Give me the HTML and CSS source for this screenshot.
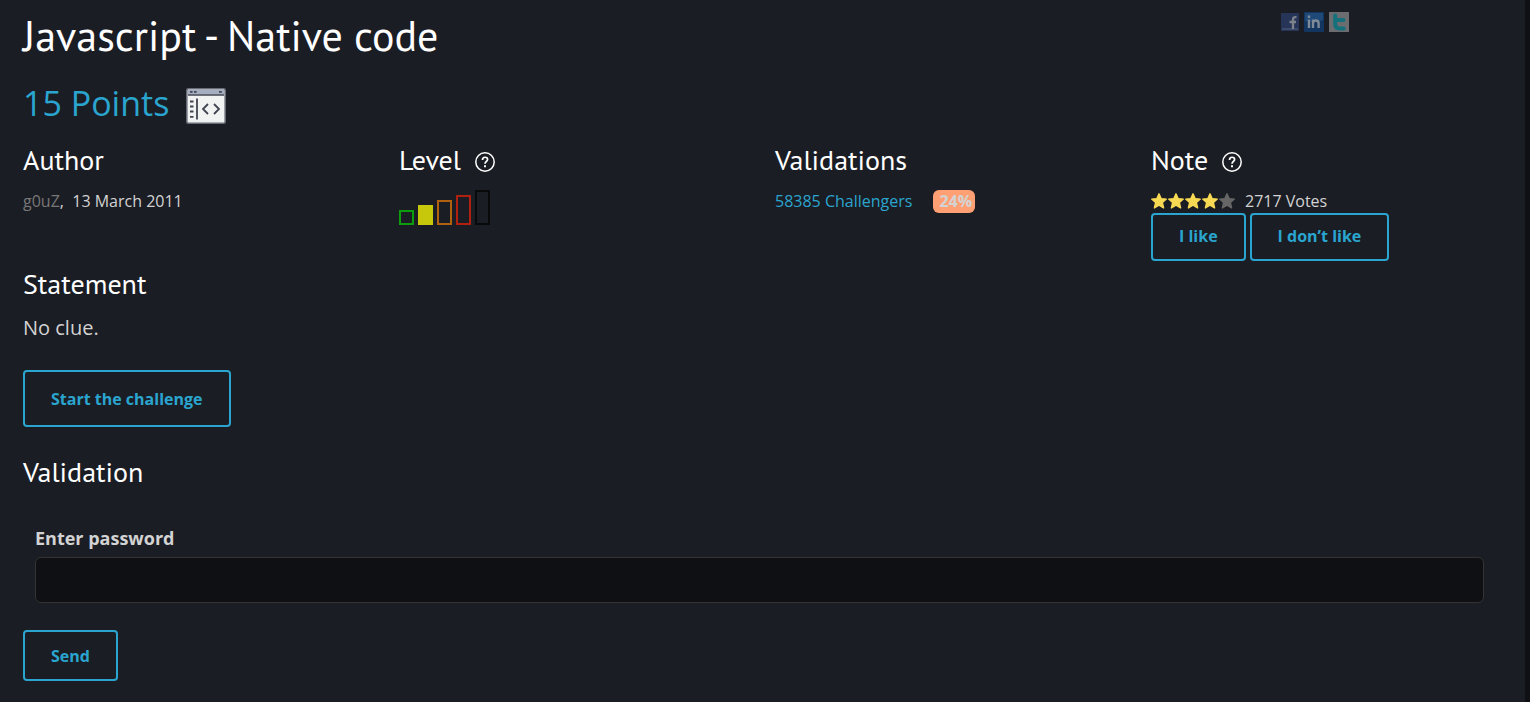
FILE: index.html
```html
<!DOCTYPE html>
<html lang="en">
<head>
<meta charset="utf-8">
<meta name="viewport" content="width=device-width, initial-scale=1">
<title>Javascript - Native code</title>
<link rel="stylesheet" href="styles.css">
</head>
<body>
<svg class="defs" aria-hidden="true">
  <symbol id="help" viewBox="0 0 20 20"><circle cx="10" cy="10" r="9.2" fill="none" stroke="#fff" stroke-width="1.5"/><path d="M7.5 8C7.5 4.4 12.6 4.4 12.6 7.5c0 2-2.6 2-2.6 4.2" fill="none" stroke="#fff" stroke-width="1.7"/><path d="M9 13.2h2v2H9z" fill="#fff"/></symbol>
  <symbol id="star" viewBox="0 0 16 16"><path d="M8 .8l2.1 4.8 5.2.5-3.9 3.5 1.2 5.3L8 12.2l-4.6 2.7 1.2-5.3L.7 6.1l5.2-.5z" fill="currentColor" stroke="currentColor" stroke-width="1.4" stroke-linejoin="round"/></symbol>
</svg>
<main class="panel">
  <header class="top">
    <h1 class="title">Javascript - Native code</h1>
    <nav class="social" aria-label="Share">
      <a href="#" aria-label="Facebook"><svg width="18" height="18" viewBox="0 0 18 18"><path d="M0 0h18v18H0z" fill="#263457"/><path d="M1 15h16v2H1z" fill="#3c4a6c"/><path d="M15.5 4.2h-1.2q-2.3 0-2.3 2.4V16M8.5 9h6.5" fill="none" stroke="#7d828c" stroke-width="2.3"/></svg></a>
      <a href="#" aria-label="LinkedIn"><svg width="20" height="20" viewBox="0 0 20 20"><rect width="20" height="20" rx="1" fill="#12365f"/><path d="M1 1h18v7Q10 12 1 9z" fill="#1f4a78"/><path d="M5 7.5V16M5 3.5V6M9 16V7.5M9 11.5q0-3 2.8-3t2.8 3V16" fill="none" stroke="#7f8a98" stroke-width="2.4"/></svg></a>
      <a href="#" aria-label="Twitter"><svg width="20" height="20" viewBox="0 0 20 20"><path d="M0 0h20v20H0z" fill="#6b6d70"/><path d="M6.2 3.5V12q0 4.5 4.5 4.5h4M6.2 8h8.3" fill="none" stroke="#14717c" stroke-width="4" stroke-linecap="round"/></svg></a>
    </nav>
  </header>

  <h2 class="points">15 Points
    <svg class="category" width="40" height="36" viewBox="0 0 40 36" role="img" aria-label="Web client"><rect x=".8" y=".8" width="38.4" height="34.4" rx="1.5" fill="#f1f3f3" stroke="#666b76" stroke-width="1.6"/><path d="M2 1.6h36v5H2z" fill="#a4aec0"/><path d="M2 7h36" stroke="#3f4450" stroke-width="1.6"/><path d="M4 3.8h2.6M8 3.8h2.6M33 3.8h2.8" stroke="#3f4450" stroke-width="1.8"/><path d="M4 13.5h3.5M4 18.5h3.5M4 23.5h3.5M4 28.8h3.5" stroke="#3f4450" stroke-width="1.8"/><path d="M11 10.5v21M22 16l-5 5 5 5M28 16l5 5-5 5" fill="none" stroke="#3f4450" stroke-width="1.8"/></svg>
  </h2>

  <div class="facts">
    <section>
      <h3 class="heading">Author</h3>
      <p class="info"><a class="author" href="#">g0uZ</a>,&nbsp; 13 March 2011</p>
    </section>
    <section>
      <h3 class="heading">Level <svg class="help"><use href="#help"/></svg></h3>
      <div class="levels" role="img" aria-label="Level 2 of 5">
        <span class="bar bar1"></span><span class="bar bar2"></span><span class="bar bar3"></span><span class="bar bar4"></span><span class="bar bar5"></span>
      </div>
    </section>
    <section>
      <h3 class="heading">Validations</h3>
      <p class="info"><a class="link" href="#">58385 Challengers</a><span class="badge">24%</span></p>
    </section>
    <section>
      <h3 class="heading">Note <svg class="help"><use href="#help"/></svg></h3>
      <p class="info"><span class="stars"><svg><use href="#star"/></svg><svg><use href="#star"/></svg><svg><use href="#star"/></svg><svg><use href="#star"/></svg><svg class="off"><use href="#star"/></svg></span>2717 Votes</p>
      <div class="votes"><button class="btn vote" type="button">I like</button><button class="btn vote" type="button">I don’t like</button></div>
    </section>
  </div>

  <section class="statement">
    <h3 class="heading">Statement</h3>
    <p class="text">No clue.</p>
    <a class="btn start" href="#">Start the challenge</a>
  </section>

  <form class="validation">
    <h3 class="heading">Validation</h3>
    <div class="field">
      <label for="password">Enter password</label>
      <input id="password" type="text">
    </div>
    <button class="btn send" type="submit">Send</button>
  </form>
</main>
</body>
</html>
```
FILE: styles.css
```css
* { box-sizing: border-box; }

body {
  margin: 0;
  padding-right: 5px;
  background: #0f1013;
  color: #d3d3d3;
  font: 16px/24px "Open Sans", "Noto Sans", sans-serif;
}

h1, h2, h3, p { margin: 0; font-weight: 400; }
a { color: inherit; text-decoration: none; }
svg { display: block; }
.defs { position: absolute; width: 0; height: 0; }

.panel {
  min-height: 100vh;
  padding: 11px 23px 20px;
  background: #1b1d24;
}

.top { display: flex; justify-content: space-between; align-items: flex-start; }
.title, .heading { font-family: "PT Sans", Lato, sans-serif; color: #fff; }
.title { font-size: 42px; line-height: 50px; }
.social { display: flex; align-items: center; gap: 5px; padding: 1px 153px 0 0; }

.points {
  display: flex;
  align-items: center;
  gap: 17px;
  margin-top: 17px;
  color: #2aa5cf;
  font-size: 34px;
  line-height: 50px;
}
.category { margin-top: 6px; }

.facts { display: grid; grid-template-columns: repeat(4, minmax(0, 1fr)); gap: 25px; margin-top: 15px; }
.heading { display: flex; align-items: center; gap: 14px; font-size: 28px; line-height: 34px; }
.help { width: 20px; height: 20px; margin-top: 4px; }
.info { display: flex; align-items: center; margin-top: 12px; }
.author { color: #777; }
.link { color: #2aa5cf; }

.levels { display: flex; align-items: flex-end; gap: 4px; margin-top: 13px; }
.bar { width: 15px; border: 2px solid; }
.bar1 { height: 15px; color: #0c9d0c; }
.bar2 { height: 20px; color: #c7c70c; background: #c7c70c; }
.bar3 { height: 25px; color: #b0620f; }
.bar4 { height: 30px; color: #b0200f; }
.bar5 { height: 35px; color: #08090b; }

.badge {
  margin-left: 21px;
  padding: 0 3px 0 6px;
  border-radius: 6px;
  background: #ffa074;
  font-weight: 700;
  line-height: 23px;
}

.stars { display: flex; gap: 1px; margin-right: 10px; color: #f7d954; }
.stars svg { width: 16px; height: 16px; }
.stars .off { color: #666; }
.votes { display: flex; gap: 4px; }

.btn {
  padding: 0 26px;
  border: 2px solid #2aa5cf;
  border-radius: 4px;
  background: transparent;
  color: #2aa5cf;
  font: 700 16px/24px "Open Sans", "Noto Sans", sans-serif;
}
.vote { height: 48px; padding-bottom: 2px; }
.start { display: inline-block; margin-top: 27px; padding-top: 15px; padding-bottom: 14px; }
.send { height: 51px; margin-top: 27px; }

.statement { margin-top: 6px; }
.text { margin-top: 12px; font-size: 20px; line-height: 30px; }

.validation { margin-top: 28px; }
.field { display: flex; flex-direction: column; margin-top: 36px; padding: 0 18px 0 12px; }
.field label { align-self: flex-start; font-size: 18px; font-weight: 700; line-height: 26px; }
.field input {
  width: 100%;
  height: 46px;
  margin-top: 6px;
  padding: 0 12px;
  border: 1px solid #333;
  border-radius: 6px;
  background: #0f1013;
  color: #d3d3d3;
  font: inherit;
}
```
